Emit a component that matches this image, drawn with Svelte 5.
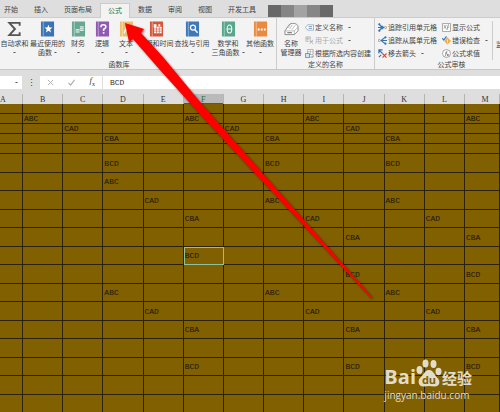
<script>
  const tabs = ['开始', '插入', '页面布局', '公式', '数据', '审阅', '视图', '开发工具'];
  let activeTab = '公式';

  const library = [
    { name: 'sum', lines: ['自动求和'] },
    { name: 'recent', lines: ['最近使用的', '函数'], color: '#3b73b4' },
    { name: 'money', lines: ['财务'], color: '#6aa793' },
    { name: 'logic', lines: ['逻辑'], color: '#8e5bb0' },
    { name: 'text', lines: ['文本'], color: '#edc06e' },
    { name: 'date', lines: ['日期和时间'], color: '#d4573c' },
    { name: 'lookup', lines: ['查找与引用'], color: '#3f77b7' },
    { name: 'math', lines: ['数学和', '三角函数'], color: '#58a78c' },
    { name: 'more', lines: ['其他函数'], color: '#e88b40' }
  ];

  const names = [
    { icon: 'tag', label: '定义名称', arrow: true },
    { icon: 'use', label: '用于公式', arrow: true, disabled: true },
    { icon: 'create', label: '根据所选内容创建' }
  ];

  const audit = [
    { icon: 'precedents', label: '追踪引用单元格' },
    { icon: 'show', label: '显示公式' },
    { icon: 'dependents', label: '追踪从属单元格' },
    { icon: 'check', label: '错误检查', arrow: true },
    { icon: 'remove', label: '移去箭头', arrow: true },
    { icon: 'evaluate', label: '公式求值' }
  ];

  const mosaic = ['#686868', '#858585', '#a3a3a3', '#868686', '#696969'];

  const columns = 'ABCDEFGHIJKLM'.split('');
  const rows = [
    {},
    { B: 'ABC', F: 'ABC', I: 'ABC', M: 'ABC' },
    { C: 'CAD', G: 'CAD', J: 'CAD' },
    { D: 'CBA', H: 'CBA', K: 'CBA' },
    {},
    { D: 'BCD', H: 'BCD', K: 'BCD' },
    { D: 'ABC' },
    { E: 'CAD', H: 'ABC', K: 'ABC' },
    { F: 'CBA', I: 'CAD', L: 'CAD' },
    { J: 'CBA', M: 'CBA' },
    { F: 'BCD' },
    { J: 'BCD', M: 'BCD' },
    { D: 'ABC', H: 'ABC', K: 'ABC' },
    { E: 'CAD', I: 'CAD', L: 'CAD' },
    { F: 'CBA', J: 'CBA', M: 'CBA' },
    {},
    { F: 'BCD', J: 'BCD', M: 'BCD' },
    {},
    {}
  ];
  const shortRows = 5;

  let selectedRow = 10;
  let selectedCol = 'F';
  let formula = 'BCD';

  function select(row, col) {
    selectedRow = row;
    selectedCol = col;
    formula = rows[row][col] || '';
  }
</script>

<div class="app">
  <nav class="tabs">
    {#each tabs as tab}
      <button class="tab" class:active={tab === activeTab} on:click={() => (activeTab = tab)}>{tab}</button>
    {/each}
    <div class="mosaic">
      {#each mosaic as shade}
        <span style="background: {shade}"></span>
      {/each}
    </div>
  </nav>

  <section class="ribbon">
    <div class="group library">
      <div class="tools">
        {#each library as item}
          <button class="big {item.name}">
            <svg viewBox="0 0 16 16">
              {#if item.name === 'sum'}
                <path d="M13.500 4.500V1.500H2.500L8.500 8L2.500 14.500H13.500V11.500" fill="none" stroke="#555" stroke-width="2" />
              {:else}
                <path d="M1 0H15V16H1z" fill={item.color} />
                <path d="M3.500 0V16" stroke="#fff" stroke-width=".7" opacity=".6" />
              {/if}
              {#if item.name === 'recent'}
                <path d="M9 3.500l1.200 3h3.100l-2.500 2 1 3.200L9 9.800l-2.800 1.900 1-3.200-2.500-2h3.100z" fill="#fff" />
              {:else if item.name === 'money'}
                <path d="M5 8h4v4h-4zM9.500 5h4v5h-4z" fill="#d9ece5" />
                <path d="M5 9.500h4M5 11h4M9.500 6.500h4M9.500 8.500h4" stroke="#6aa793" stroke-width=".5" />
              {:else if item.name === 'logic'}
                <path d="M6.500 6V5Q6.500 3.500 9 3.500T11.600 5.600Q11.600 7 9.200 8.300V10M9.200 11.300V13" fill="none" stroke="#fff" stroke-width="1.700" />
              {:else if item.name === 'text'}
                <path d="M5.500 12.500L9 3.500L12.500 12.500M7 9.500H11" fill="none" stroke="#fff" stroke-width="1.400" />
              {:else if item.name === 'date'}
                <path d="M5.500 5.500h8v7h-8zM5 3h3v3H5zM10 3h2v2h-2z" fill="#fff" />
                <path d="M5.500 8h8M5.500 10.300h8M8 6v6.500M11 6v6.500" stroke="#d4573c" stroke-width=".7" />
              {:else if item.name === 'lookup'}
                <circle cx="8.500" cy="6.500" r="2.700" fill="none" stroke="#fff" stroke-width="1.300" />
                <path d="M10.300 8.500L13.500 12" stroke="#fff" stroke-width="1.500" />
              {:else if item.name === 'math'}
                <ellipse cx="9" cy="8" rx="2.500" ry="4.300" fill="none" stroke="#fff" stroke-width="1.100" />
                <path d="M6.500 8H11.500" stroke="#fff" />
              {:else if item.name === 'more'}
                <path d="M5 7.500h2v2H5zM8.300 7.500h2v2h-2zM11.600 7.500h2v2h-2z" fill="#fff" />
              {/if}
            </svg>
            <span>{item.lines[0]}</span>
            {#if item.lines[1]}
              <span class="second">{item.lines[1]}<i class="caret"></i></span>
            {:else}
              <span class="second"><i class="caret"></i></span>
            {/if}
          </button>
        {/each}
      </div>
      <div class="title">函数库</div>
    </div>

    <div class="group names">
      <div class="tools">
        <button class="big manager">
          <svg viewBox="0 0 16 16">
            <path d="M1 10L5 4Q6 2 9 2Q15 2 15 6V10L11 14H1z" fill="#fff" stroke="#888" />
            <path d="M1 10H11V14M11 10L15 6M4 7L7 3M6 8L9 3.500M8.500 8.500L12 4" fill="none" stroke="#999" stroke-width=".7" />
            <path d="M3.500 12H8.500" stroke="#555" />
          </svg>
          <span>名称</span>
          <span class="second">管理器</span>
        </button>
        <div class="list">
          {#each names as item}
            <button class="small" disabled={item.disabled}>
              <svg viewBox="0 0 10 10">
                {#if item.icon === 'tag'}
                  <path d="M.5 5L3 2H9.500V8H3z" fill="#fff" stroke="#8098b0" stroke-width=".8" />
                  <path d="M4 4H8M4 6H8" stroke="#4778ad" stroke-width=".8" />
                {:else if item.icon === 'use'}
                  <path d="M1 1H6V4M1 1V6H4M3 1V5M1 3H5M5 4L9 9M9 4L5 9M5 6H9" fill="none" stroke="#aaa" stroke-width=".8" />
                {:else}
                  <path d="M3 .5H9V6H3z" fill="#fff" stroke="#888" stroke-width=".7" />
                  <path d="M3 3H9M6 1V6" stroke="#888" stroke-width=".5" />
                  <path d="M.5 5H5V9.500H.5z" fill="#d5e4f2" stroke="#4b78a8" stroke-width=".8" />
                  <path d="M6 9H9V7" fill="none" stroke="#4b78a8" stroke-width=".8" />
                {/if}
              </svg>
              <span>{item.label}</span>
              {#if item.arrow}<i class="caret"></i>{/if}
            </button>
          {/each}
        </div>
      </div>
      <div class="title">定义的名称</div>
    </div>

    <div class="group audit">
      <div class="tools">
        <div class="list pairs">
          {#each audit as item}
            <button class="small">
              <svg viewBox="0 0 10 10">
                {#if item.icon === 'precedents'}
                  <path d="M1 1L4 4.500M1 9L4 5.500M0 5H6M4 3L6.300 5L4 7" fill="none" stroke="#3471b5" stroke-width="1.200" />
                  <circle cx="1.500" cy="1.500" r="1.200" fill="#3471b5" />
                  <circle cx="1.500" cy="8.500" r="1.200" fill="#3471b5" />
                  <circle cx="8.300" cy="5" r="1.200" fill="none" stroke="#777" stroke-width=".7" />
                {:else if item.icon === 'dependents'}
                  <circle cx="1.500" cy="5" r="1.200" fill="none" stroke="#777" stroke-width=".7" />
                  <path d="M3 5H10M4 4.500L8 1.500M4 5.500L8 8.500" fill="none" stroke="#3471b5" stroke-width="1.200" />
                  <circle cx="8.300" cy="1.500" r="1.200" fill="#3471b5" />
                  <circle cx="8.300" cy="8.500" r="1.200" fill="#3471b5" />
                {:else if item.icon === 'remove'}
                  <path d="M1 1L5 5M1 5V1H5M1 9L3.500 6.500" fill="none" stroke="#3471b5" stroke-width="1.300" />
                  <path d="M5 5L9.500 9.500M9.500 5L5 9.500" stroke="#d8432e" stroke-width="1.200" />
                {:else if item.icon === 'show'}
                  <path d="M.5 .5H9.500V9.500H.5z" fill="#fff" stroke="#888" stroke-width=".8" />
                  <path d="M2 2L5 7M5 2L2 6M5 8Q6 8 6.500 4T8 2.500M5.500 4.500H8" fill="none" stroke="#777" stroke-width=".7" />
                {:else if item.icon === 'check'}
                  <path d="M6 1.500L10 5.500L6 9.700L2.500 5.500z" fill="#efad43" />
                  <path d="M6 4V6.500M6 7.300V8.300" stroke="#fff" stroke-width=".9" />
                  <path d="M.3 2.500L2 4.500L5 .5" fill="none" stroke="#3471b5" stroke-width="1.300" />
                {:else}
                  <circle cx="5" cy="5" r="4.400" fill="#fff" stroke="#777" stroke-width=".7" />
                  <path d="M3 8Q4 8 4.500 5T6 2.500M3.500 4.500H5.800M5.500 5.500L7.500 8M7.500 5.500L5.500 8" fill="none" stroke="#555" stroke-width=".7" />
                {/if}
              </svg>
              <span>{item.label}</span>
              {#if item.arrow}<i class="caret"></i>{/if}
            </button>
          {/each}
        </div>
        <button class="big watch"><span>监视窗口</span></button>
      </div>
      <div class="title">公式审核</div>
    </div>
  </section>

  <div class="formula-bar">
    <button class="name-box" aria-label="名称框"><i class="caret"></i></button>
    <span class="dots">⋮</span>
    <div class="actions">
      <button aria-label="取消"><svg viewBox="0 0 8 8"><path d="M1 1L7 7M7 1L1 7" stroke="#aaa" fill="none" /></svg></button>
      <button aria-label="输入"><svg viewBox="0 0 8 8"><path d="M.5 4.500L3 7L7.500 1" stroke="#aaa" fill="none" stroke-width="1.200" /></svg></button>
      <button class="fx" aria-label="插入函数"><i>f</i><sub>x</sub></button>
    </div>
    <input aria-label="编辑栏" bind:value={formula} />
  </div>

  <table class="sheet">
    <thead>
      <tr>
        {#each columns as col}
          <th class:current={col === selectedCol}>{col}</th>
        {/each}
      </tr>
    </thead>
    <tbody>
      {#each rows as row, r}
        <tr class:short={r < shortRows}>
          {#each columns as col}
            <td class:selected={r === selectedRow && col === selectedCol} on:click={() => select(r, col)}>{row[col] || ''}</td>
          {/each}
        </tr>
      {/each}
    </tbody>
  </table>

  <svg class="pointer" viewBox="0 0 250 280">
    <path d="M1 1L20 7L17 11L39 35L82 87L248 275L247 276L73 89L36 48L9 17L5 20z" fill="#f00" />
  </svg>

  <div class="watermark">
    <div class="brand">
      <span>Bai</span>
      <svg viewBox="0 0 26 28">
        <ellipse cx="3.500" cy="11" rx="3" ry="4" />
        <ellipse cx="9.500" cy="4.500" rx="3" ry="4" />
        <ellipse cx="17.500" cy="5" rx="3" ry="4" />
        <ellipse cx="22.500" cy="12.500" rx="3" ry="3.800" />
        <path d="M13 11C9 11 8 15 5 18C1 21 2 28 8 27.500Q13 26.500 18 27.500C24 28 25 22 21 18.500C18 15 17 11 13 11z" />
        <text x="13" y="25" text-anchor="middle">du</text>
      </svg>
      <span class="cn">经验</span>
    </div>
    <div class="site">jingyan.baidu.com</div>
  </div>
</div>

<style>
  :global(body) {
    margin: 0;
    background: #806000;
  }

  .app {
    position: relative;
    overflow: hidden;
    background: #dedede;
    color: #444;
    font-family: "Noto Sans CJK SC", sans-serif;
    font-size: 7px;
    line-height: 9px;
  }

  button {
    padding: 0;
    border: 0;
    background: none;
    color: inherit;
    font: inherit;
    white-space: nowrap;
  }

  .tabs {
    display: flex;
    height: 17px;
    margin-left: -4px;
    border-bottom: 1px solid #ccc;
  }

  .tab {
    padding: 1px 8px 0;
  }

  .tab.active {
    margin: 3px 0 -1px;
    border: 1px solid #ccc;
    border-bottom: 0;
    padding: 0 7px 2px;
    background: #f3f3f3;
    color: #217346;
  }

  .mosaic {
    display: flex;
    margin: 5px 0 0 4px;
  }

  .mosaic span {
    width: 13px;
  }

  .ribbon {
    display: flex;
    height: 51px;
    border-bottom: 1px solid #c8c8c8;
    background: #f3f3f3;
  }

  .group {
    flex: none;
    box-sizing: border-box;
    display: flex;
    flex-direction: column;
    justify-content: space-between;
    padding: 3px 0 0;
  }

  .tools {
    display: flex;
  }

  .title {
    text-align: center;
  }

  .big {
    display: flex;
    flex-direction: column;
    align-items: center;
  }

  .big svg {
    width: 15px;
    height: 16px;
    margin-bottom: 2px;
  }

  .second {
    display: flex;
    align-items: center;
    gap: 2px;
    height: 8px;
  }

  .caret {
    border: 1px solid transparent;
    border-top-color: #555;
    border-bottom: 0;
    width: 1px;
  }

  .library {
    width: 276px;
  }

  .library .big {
    flex: none;
    width: 24px;
  }

  .library .sum {
    width: 29px;
  }

  .library .recent {
    width: 37px;
  }

  .library .date,
  .library .lookup,
  .library .math {
    width: 36px;
  }

  .library .more {
    width: 28px;
  }

  .library .title {
    padding-right: 38px;
  }

  .names {
    width: 98px;
  }

  .names,
  .audit {
    border-left: 1px solid #ccc;
  }

  .manager {
    width: 28px;
  }

  .list {
    display: grid;
    grid-auto-rows: 13px;
    align-items: center;
  }

  .small {
    display: flex;
    align-items: center;
    gap: 1px;
  }

  .small:disabled {
    color: #aaa;
  }

  .small svg {
    width: 9px;
    height: 9px;
  }

  .small .caret {
    margin-left: 4px;
  }

  .audit {
    width: 154px;
  }

  .pairs {
    grid-template-columns: 64px 50px;
    padding-left: 3px;
    border-right: 1px solid #ccc;
  }

  .watch {
    padding: 19px 0 0 3px;
  }

  .formula-bar {
    display: flex;
    margin: 6px 0 5px;
    height: 13px;
    align-items: stretch;
  }

  .name-box {
    display: flex;
    align-items: center;
    justify-content: flex-end;
    width: 22px;
    padding-right: 4px;
    background: #fff;
  }

  .dots {
    width: 18px;
    font-size: 9px;
    line-height: 13px;
    text-align: center;
  }

  .actions {
    display: flex;
    justify-content: space-around;
    width: 62px;
    margin-right: 1px;
    background: #fff;
  }

  .actions svg {
    display: block;
    width: 7px;
    height: 7px;
  }

  .fx {
    font-family: "Liberation Serif", serif;
    font-size: 9px;
  }

  .fx sub {
    font-size: 6px;
  }

  input {
    flex: 1;
    min-width: 0;
    border: 0;
    padding: 0 7px;
    background: #fff;
    color: #333;
    font: 8px "Liberation Mono", monospace;
  }

  .sheet {
    width: 100%;
    table-layout: fixed;
    border-collapse: separate;
    border-spacing: 0;
    background: #806000;
    color: #1c1500;
    font: 8px/9px "Liberation Mono", monospace;
  }

  th,
  td {
    box-sizing: border-box;
    padding: 0;
    border-right: 1px solid #2c2100;
  }

  th {
    height: 10px;
    border-color: #b5b5b5;
    background: #dedede;
    color: #333;
    font-family: "Liberation Serif", serif;
    font-weight: normal;
  }

  /* the outer columns run past the window edges */
  th:first-child {
    width: 23px;
    padding-right: 18px;
  }

  th:last-child {
    width: 35px;
    padding-left: 6px;
  }

  th.current {
    background: #bababa;
    color: #217346;
    box-shadow: inset 0 -1px #217346;
  }

  td {
    height: 18px;
    border-bottom: 1px solid #2c2100;
    padding-left: 1px;
    white-space: nowrap;
  }

  tr:nth-child(even) td {
    height: 19px;
  }

  tr.short td {
    height: 10px;
  }

  td.selected {
    outline: 1px solid #8fc3a0;
    outline-offset: -1px;
  }

  .pointer {
    position: absolute;
    left: 124px;
    top: 22px;
    width: 250px;
    height: 280px;
    pointer-events: none;
    filter: drop-shadow(1px 1px 1px rgba(0, 0, 0, 0.5));
  }

  .watermark {
    position: absolute;
    right: 28px;
    bottom: 12px;
    color: #e2dccb;
    fill: #e2dccb;
  }

  .brand {
    display: flex;
    align-items: flex-end;
    margin-bottom: 2px;
    font: bold 20px/20px "Open Sans", sans-serif;
  }

  .brand svg {
    width: 26px;
    height: 28px;
  }

  .brand text {
    fill: #806000;
    font: bold 11px "Open Sans", sans-serif;
  }

  .brand .cn {
    font: bold 15px/18px "Noto Sans CJK SC", sans-serif;
  }

  .site {
    font: 10px/12px "Open Sans", sans-serif;
  }
</style>
